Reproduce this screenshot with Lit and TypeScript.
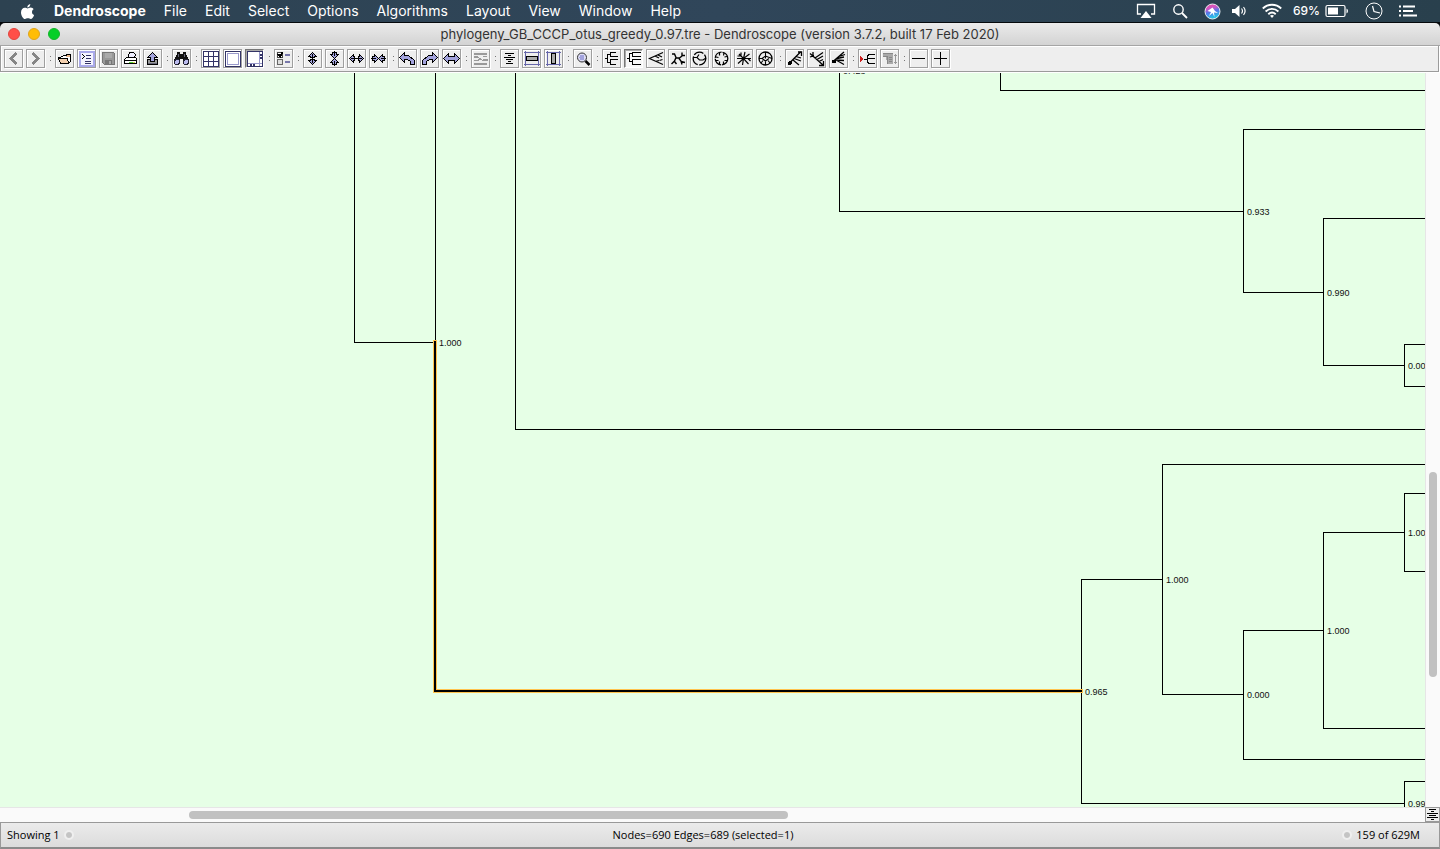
import { LitElement, html, svg, css, nothing, type SVGTemplateResult } from "lit";
import { customElement, property } from "lit/decorators.js";
import { classMap } from "lit/directives/class-map.js";
import { styleMap } from "lit/directives/style-map.js";

const line = (d: string, stroke = "#000", width = 1) =>
  svg`<path d=${d} fill="none" stroke=${stroke} stroke-width=${width} />`;
const shape = (d: string, fill: string, stroke = "#000") =>
  svg`<path d=${d} fill=${fill} stroke=${stroke} />`;
const smooth = (d: string, stroke = "#000", width = 1.4) =>
  svg`<path d=${d} fill="none" stroke=${stroke} stroke-width=${width} shape-rendering="auto" />`;

const LILAC = "#a3a3dd";
const NAVY = "#333366";

const arrowV = (y: number, dir: number) =>
  shape(`M9.5 ${y}L${13.5} ${y + 4 * dir}H11.5V${y + 5 * dir}H7.5V${y + 4 * dir}H5.5Z`, LILAC);
const arrowH = (x: number, dir: number) =>
  shape(`M${x} 9.5L${x + 4 * dir} 5.5V7.5H${x + 5 * dir}V11.5H${x + 4 * dir}V13.5Z`, LILAC);

const ICONS: Record<string, SVGTemplateResult> = {
  back: svg`<path d="M12.5 4L7 9.5L12.5 15" fill="none" stroke="#858585" stroke-width="3" />`,
  forward: svg`<path d="M6.5 4L12 9.5L6.5 15" fill="none" stroke="#858585" stroke-width="3" />`,
  open: svg`${shape("M3.5 8.5H5.5L8.5 6.5H10.5L12.5 5.5H15.5V12.5L13.5 14.5H5.5Z", "#fff")}
    ${shape("M3.5 9.5H12.5L13.5 14.5H5.5Z", "#f2cfae")}${line("M11 7.5H15M12 6.5H15", "#eab98f")}`,
  commands: svg`<rect x="3" y="3" width="14" height="14" fill="#f4f4ff" stroke="#a9a9ea" stroke-width="2" />
    ${line("M5 5.5H6M6 6.5H7M7 7.5H8M6 8.5H7M5 9.5H6")}${line("M9 6.5H14M9 9.5H14M8 12.5H14M8 14.5H14", NAVY)}`,
  save: svg`${shape("M3.5 3.5H14.5L15.5 4.5V15.5H5.5L3.5 13.5Z", "#999", "#777")}
    <rect x="6" y="4" width="7" height="5" fill="#aaa" /><rect x="6" y="11" width="7" height="5" fill="#777" /><rect x="10" y="12" width="2" height="3" fill="#aaa" />`,
  print: svg`${shape("M6.5 9.5L8.5 3.5H12.5L14.5 5.5L13.5 9.5Z", "#eef")}
    ${shape("M3.5 10.5L5.5 8.5H14.5L15.5 9.5V14.5H3.5Z", "#fff")}${line("M4 11.5H15")}${line("M8 13.5H12", "#5c3", 1)}${line("M12 13.5H14", "#dd4", 1)}`,
  export: svg`${shape("M4.5 10.5H14.5V15.5H4.5Z", "#999")}${line("M5 14.5H14", "#667")}
    ${shape("M9.5 3.5L14.5 8.5H11.5V12.5H7.5V8.5H4.5Z", LILAC)}`,
  find: svg`<path d="M5 3H8V5H11V3H14V5L17 11V14H11V10H8V14H2V11L5 5Z" fill="#111" />
    <circle cx="5" cy="13" r="2.5" fill="#bbe" stroke="#223" /><circle cx="14" cy="13" r="2.5" fill="#bbe" stroke="#223" />
    ${line("M6.5 5V8M12.5 5V8", "#667")}`,
  grid: svg`<rect x="1" y="1" width="17" height="17" fill="#fff" />${line("M2.5 2V18M7.5 2V18M12.5 2V18M17.5 2V18M2 2.5H18M2 7.5H18M2 12.5H18M2 17.5H18", NAVY)}`,
  frame: svg`<rect x="2.5" y="2.5" width="15" height="15" fill="#fff" stroke=${NAVY} /><rect x="4.5" y="4.5" width="11" height="11" fill="#fff" stroke="#9999cc" />`,
  scrollbars: svg`<rect x="2.5" y="2.5" width="15" height="15" fill="#fff" stroke=${NAVY} />${line("M14.5 3V17M3 14.5H17", "#9999cc")}
    <rect x="15" y="5" width="3" height="2" fill=${NAVY} /><rect x="15" y="8" width="3" height="2" fill=${NAVY} /><rect x="5" y="15" width="2" height="3" fill=${NAVY} /><rect x="8" y="15" width="2" height="3" fill=${NAVY} />`,
  checklist: svg`<rect x="3.5" y="3.5" width="5" height="5" fill="#fff" stroke="#444" /><rect x="3.5" y="10.5" width="5" height="5" fill="#ddd" stroke="#666" />
    ${line("M4 5L6 7.5L8.5 3", "#000", 2)}${line("M11 6H16M11 13H16", "#7777aa", 2)}`,
  expandV: svg`${arrowV(3.5, 1)}${arrowV(15.5, -1)}${line("M9.5 5V14")}`,
  contractV: svg`${shape("M7.5 3.5H11.5V5.5H13.5L9.5 9.5L5.5 5.5H7.5Z", LILAC)}${shape("M7.5 15.5H11.5V13.5H13.5L9.5 9.5L5.5 13.5H7.5Z", LILAC)}${line("M9.5 2V7M9.5 12V17")}`,
  expandH: svg`${arrowH(2.5, 1)}${arrowH(16.5, -1)}${line("M4 9.5H15")}`,
  contractH: svg`${shape("M3.5 7.5H5.5V5.5L9.5 9.5L5.5 13.5V11.5H3.5Z", LILAC)}${shape("M15.5 7.5H13.5V5.5L9.5 9.5L13.5 13.5V11.5H15.5Z", LILAC)}${line("M2 9.5H7M12 9.5H17")}`,
  undo: shape("M1.5 8.5L6.5 3.5V6.5H10.5L16.5 11.5V15.5H12.5V12.5L9.5 10.5H6.5V13.5Z", LILAC),
  redo: shape("M17.5 8.5L12.5 3.5V6.5H8.5L2.5 11.5V15.5H6.5V12.5L9.5 10.5H12.5V13.5Z", LILAC),
  swap: shape("M1.5 9.5L6.5 4.5V7.5H12.5V4.5L17.5 9.5L12.5 14.5V11.5H6.5V14.5Z", LILAC),
  tangle: svg`${line("M3 4.5H16M3 14.5H16", "#999", 2)}${line("M3 8H7M12 11H17", "#999", 2)}${line("M7 8.5L12 11.5M3 11.5H6L9 10.5M12 7.5H16", "#999")}`,
  center: line("M5 4.5H14M8 6.5H11M4 8.5H15M6 10.5H13M8 12.5H11M6 14.5H13"),
  fitH: svg`${line("M3.5 2V17M16.5 2V17M2 3.5H18M2 15.5H18", "#6666aa")}<rect x="4.5" y="7.5" width="11" height="4" fill="#aaa" stroke="#000" />`,
  fitV: svg`${line("M2 3.5H17M2 15.5H17M3.5 2V17M15.5 2V17", "#6666aa")}<rect x="7.5" y="4.5" width="4" height="10" fill="#aaa" stroke="#000" />`,
  zoom: svg`<circle cx="9" cy="8.5" r="4.5" fill="#ddddf5" stroke="#333" shape-rendering="auto" /><circle cx="9" cy="8.5" r="2.5" fill="#a3a3dd" />${smooth("M12.5 12L16.5 16", "#000", 2.5)}`,
  phylogram: line("M3 9.5H5.5M8 5.5H5.5V13.5H8M8.5 3.5V7.5M8 3.5H14M8 7.5H16M8.5 10.5V15.5M8 10.5H16M8 15.5H14"),
  cladogram: line("M3 9.5H5.5M5.5 4V13M5 4.5H9M8.5 3V7.5M8 3.5H17M8 7.5H17M5 12.5H9M8.5 10V15.5M8 10.5H17M8 15.5H17"),
  slanted: smooth("M17 3.5L3.5 9.5L17 15.5M12 6L16 8M13.5 11.5L16.5 10.5M10 12.3L13 11.5M9 7L13 9", "#000", 1.2),
  radial: smooth("M4 5H6.5L8 8.5L6.5 12L3.5 15M6.5 12.5L8.5 15M8 9H11.5L14 7V3.5M14 6.5H17M11 9.5L13 12L14 15.5M13 12.5L17 13.5"),
  circular: svg`<circle cx="9.5" cy="9.5" r="6.3" fill="none" stroke="#000" stroke-width="1.3" stroke-dasharray="10 1.5" shape-rendering="auto" />${smooth("M3 8.5H7L9.5 11H13L16 9M7 8.5L9 5.5", "#000", 1.2)}`,
  circularCladogram: svg`<circle cx="9.5" cy="9.5" r="6.3" fill="none" stroke="#000" stroke-width="1.3" stroke-dasharray="9 1" shape-rendering="auto" />${smooth("M7.5 4V6.500M12 4L11.500 6.500M15 7.500L12.500 8M15 11.500H12.500M11.500 15V12.500M7.500 15V12.500M4 11.500H6.500M4 8L6.500 8.500", "#000", 1.2)}`,
  innerCircular: smooth("M3 9.5H17M9.5 9.5L11 3M9.5 9.5L8.5 16M5 5L9.5 9.5L15.5 5M4 14.5L9.5 9.5L14.5 15M7 3.5V7M3.5 7H7M14 9.5L16.5 12", "#000", 1.2),
  wheel: svg`<circle cx="9.5" cy="9.5" r="6.5" fill="none" stroke="#000" stroke-width="1.3" shape-rendering="auto" />${smooth("M9.5 3V9.5M3 9.5H6L9.5 7L16 9.5M6 9.5L9.5 12L13 9.5M9.5 12V16M5 14L7 11.5M14 14L12 11.5", "#000", 1.1)}`,
  labelsUp: svg`${smooth("M4 14.5L16 2.5M9 9.5L16 12M11 7.5L16 9M8 11L14 16M13 3H16.5V7", "#000", 1.3)}<circle cx="5" cy="14" r="2" fill="#000" />`,
  labelsDown: svg`${smooth("M3 4.5L16 16M8 9L16 3.5M10 10.5L16 7M12 12.5L16 10.5M16.5 12V16.5H12M3 8L6 7V3", "#000", 1.3)}<circle cx="6" cy="7" r="1.5" fill="#000" />`,
  labels: svg`${smooth("M4 12.5L15 3M8 9.5L15 8M6 11L15 11.5M7 11L15 15.5M10 7.5L16 5.5", "#000", 1.3)}<circle cx="5" cy="12.5" r="2" fill="#000" />`,
  reroot: svg`<path d="M2 7L5 10L2 13Z" fill="#c22" />${line("M6 10.5H9.5M17 5.5H11L9.5 7V13L11 14.5H17M10 9.500H17")}`,
  subtree: svg`<path d="M3 4H13V15H8V11H6V8H3Z" fill="#aaa" />${line("M3 4.5H13M3 7.5H8M7.5 8V14.5M9 8.5H12M9 10.5H12M9 12.5H12", "#888")}${line("M15.5 5V15M14 6.5H17M14 13.5H17", "#999")}`,
  minus: line("M3 9.5H16"),
  plus: line("M3 9.5H16M9.5 3V16"),
};

const TOOLS: [string, string][][] = [
  [["back", "Previous"], ["forward", "Next"]],
  [["open", "Open"], ["commands", "Enter command"], ["save", "Save"], ["print", "Print"], ["export", "Export image"]],
  [["find", "Find"]],
  [["grid", "Set grid"], ["frame", "Less panels"], ["scrollbars", "Show scrollbars"]],
  [["checklist", "Format"]],
  [["expandV", "Expand vertical"], ["contractV", "Contract vertical"], ["expandH", "Expand horizontal"], ["contractH", "Contract horizontal"]],
  [["undo", "Rotate left"], ["redo", "Rotate right"], ["swap", "Flip"]],
  [["tangle", "Tanglegram"]],
  [["center", "Zoom to fit"], ["fitH", "Fit width"], ["fitV", "Fit height"]],
  [["zoom", "Magnifier"]],
  [["phylogram", "Phylogram"], ["cladogram", "Cladogram"], ["slanted", "Slanted cladogram"], ["radial", "Radial"], ["circular", "Circular phylogram"], ["circularCladogram", "Circular cladogram"], ["innerCircular", "Inner circular"], ["wheel", "Wheel"]],
  [["labelsUp", "Rotate subtrees"], ["labelsDown", "Ladderize right"], ["labels", "Ladderize left"]],
  [["reroot", "Reroot"], ["subtree", "Reorder subtree"]],
  [["minus", "Collapse"], ["plus", "Uncollapse"]],
];
const PRESSED = new Set(["scrollbars", "cladogram"]);
const DISABLED = new Set(["back", "forward", "save", "tangle", "subtree"]);

const MENUS = ["File", "Edit", "Select", "Options", "Algorithms", "Layout", "View", "Window", "Help"];

@customElement("mac-menu-bar")
class MacMenuBar extends LitElement {
  static styles = css`
    :host { display: flex; align-items: center; justify-content: space-between; height: 22px;
      padding: 0 23px 0 20px; border-bottom: 1px solid #05090c; color: #fff;
      background: linear-gradient(90deg, #2d4251, #30465a 50%, #29404d);
      font: 400 14px/22px Inter, "Liberation Sans", sans-serif; }
    nav, .tray { display: flex; align-items: center; }
    nav { gap: 18px; }
    button { font: inherit; color: inherit; background: none; border: 0; padding: 0; display: block; }
    .app { font-weight: 700; }
    .tray { gap: 16px; }
    .pair { display: flex; align-items: center; gap: 11px; }
    .battery { display: flex; align-items: center; gap: 5px; font-size: 12px; font-weight: 500; }
    svg { display: block; }
  `;
  render() {
    return html`
      <nav>
        <button aria-label="Apple">
          <svg width="16" height="17" viewBox="0 0 16 17" fill="#fff"><path d="M10.300 1C10.400 2.800 8.900 4.500 7.300 4.500C7.100 2.900 8.600 1.200 10.300 1ZM7.600 5.400C8.200 5.400 9.200 4.600 10.600 4.600C12 4.600 13.100 5.400 13.600 6.200C11.300 7.600 11.600 11 14.100 12C13.500 13.800 12.100 16 10.800 16C9.700 16 9.300 15.300 7.900 15.300C6.500 15.300 6 16 5 16C3.300 16 1 12.500 1 9.400C1 6.300 2.900 4.700 4.800 4.700C6 4.700 7 5.400 7.600 5.400Z" /></svg>
        </button>
        <button class="app">Dendroscope</button>
        ${MENUS.map((m) => html`<button>${m}</button>`)}
      </nav>
      <div class="tray">
        <svg width="20" height="16" viewBox="0 0 20 16"><path d="M5 11H1.500V1.500H18.500V11H15" fill="none" stroke="#fff" stroke-width="1.300" /><path d="M10 8L15.500 15H4.500Z" fill="#fff" /></svg>
        <svg width="16" height="16" viewBox="0 0 16 16" fill="none" stroke="#fff"><circle cx="6.500" cy="6.500" r="4.700" stroke-width="1.400" /><path d="M10 10L15 15" stroke-width="1.800" /></svg>
        <div class="pair">
          <svg width="17" height="17" viewBox="0 0 17 17">
            <defs><linearGradient id="s" x1="0" y1="0" x2="0.300" y2="1"><stop offset="0" stop-color="#f2509a" /><stop offset=".35" stop-color="#d055c5" /><stop offset=".6" stop-color="#5577e8" /><stop offset="1" stop-color="#27c7e8" /></linearGradient></defs>
            <circle cx="8.500" cy="8.500" r="7.500" fill="url(#s)" stroke="#e8eef5" /><path d="M8.500 4.500L11 8L14 10L10 9.500L10.500 14L8.500 10L5 13L7 9L3.500 8Z" fill="#fff" />
          </svg>
          <svg width="14" height="14" viewBox="0 0 14 14"><path d="M0 5H3L7.500 1V13L3 9H0Z" fill="#fff" /><path d="M9.500 4.500C10.700 6 10.700 8 9.500 9.500M11.500 3C13.500 5.500 13.500 8.500 11.500 11" fill="none" stroke="#fff" stroke-width="1.200" /></svg>
        </div>
        <div class="pair">
          <svg width="20" height="16" viewBox="0 0 20 16" fill="none" stroke="#fff" stroke-width="1.900"><path d="M.8 5.500C6 .5 14 .5 19.200 5.500M3.600 8.500C7.400 5 12.600 5 16.400 8.500M6.300 11.300C8.500 9.300 11.500 9.300 13.700 11.300" /><path d="M10 15L8 12.800C9.200 11.800 10.800 11.800 12 12.800Z" fill="#fff" stroke="none" /></svg>
          <span class="battery">69%
            <svg width="24" height="14" viewBox="0 0 24 14"><rect x="1" y="1.500" width="19" height="11" rx="1.500" fill="none" stroke="#fff" stroke-width="1.200" /><rect x="3" y="3.500" width="10" height="7" fill="#fff" /><path d="M21.500 4.500C23.500 5.500 23.500 8.500 21.500 9.500Z" fill="#fff" /></svg>
          </span>
        </div>
        <svg width="18" height="18" viewBox="0 0 18 18" fill="none" stroke="#fff"><circle cx="9" cy="9" r="8" /><path d="M7.500 4L9 9.500L15 11" stroke-width="1.200" /></svg>
        <svg width="18" height="12" viewBox="0 0 18 12" fill="none" stroke="#fff" stroke-width="2"><path d="M0 1.500H2M4 1.500H16M0 6H2M4 6H14M0 10.500H2M4 10.500H18" /></svg>
      </div>
    `;
  }
}

@customElement("tool-bar")
class ToolBar extends LitElement {
  static styles = css`
    :host { display: flex; align-items: center; gap: 3px; height: 25px; padding: 0 3px;
      margin-right: 1px; background: #eee; border: 1px solid #9b9b9b; border-top: 0;
      box-shadow: inset 1px 1px #fff; }
    .group { display: flex; gap: 3px; }
    .sep { width: 4px; height: 5px; display: flex; flex-direction: column; align-items: center; justify-content: space-between; }
    .sep::before, .sep::after { content: ""; width: 1px; height: 1px; background: #777; }
    button { width: 19px; height: 19px; padding: 0; border: 1px solid #9f9f9f; background: #eee;
      box-shadow: inset 1px 1px #fff, 1px 1px #fff; }
    .pressed { background: #f7f7f7; border-color: #777 #fff #fff #777; box-shadow: inset 1px 1px #aaa; }
    svg { width: 19px; height: 19px; margin: -1px; display: block; }
  `;
  render() {
    return html`${TOOLS.map((group, i) => html`
      ${i ? html`<span class="sep"></span>` : nothing}
      <div class="group" role="group">
        ${group.map(([id, label]) => html`
          <button aria-label=${label} ?disabled=${DISABLED.has(id)} class=${classMap({ pressed: PRESSED.has(id) })}>
            <svg viewBox="0 0 19 19" shape-rendering="crispEdges">${ICONS[id]}</svg>
          </button>`)}
      </div>`)}`;
  }
}

const BRANCHES = [
  "M354.5 60V342.5H435.5V60", "M515.5 60V429.5H2400", "M839.5 60V211.5H1243.5", "M1000.5 60V90.5H2400",
  "M2400 129.5H1243.5V292.5H1323.5", "M2400 218.5H1323.5V365.5H1404.5", "M2400 344.5H1404.5V386.5H2400",
  "M2400 464.5H1162.5V694.5H1243.5", "M2400 493.5H1404.5V571.5H2400", "M1404.5 532.5H1323.5V728.5H2400",
  "M1323.5 630.5H1243.5V759.5H2400", "M1162.5 579.5H1081.5V803.5H1404.5", "M2400 781.5H1404.5V840",
];
const SUPPORT: [number, number, string][] = [
  [843, 74, "0.428"], [1247, 215, "0.933"], [1327, 296, "0.990"], [1408, 369, "0.000"], [439, 346, "1.000"],
  [1408, 536, "1.000"], [1166, 583, "1.000"], [1327, 634, "1.000"], [1247, 698, "0.000"], [1085, 695, "0.965"], [1408, 807, "0.990"],
];

@customElement("tree-view")
class TreeView extends LitElement {
  static styles = css`
    :host { display: block; overflow: hidden; background: #e6ffe6; min-width: 0; min-height: 0; contain: size; }
    svg { display: block; width: 100%; height: 100%; }
    .branch { fill: none; stroke: #000; shape-rendering: crispEdges; }
    .halo { fill: none; stroke: #ffc34d; stroke-width: 4px; }
    .selected { fill: none; stroke: #000; stroke-width: 2px; }
    text { font: 9px "Liberation Sans", Arial, sans-serif; fill: #111; }
  `;
  render() {
    return html`<svg role="img" aria-label="Phylogenetic tree"><g transform="translate(0 -73)">
      ${BRANCHES.map((d) => svg`<path class="branch" d=${d} />`)}
      <path class="halo" d="M435 340V691H1083" /><path class="selected" d="M435 341V691H1082" />
      ${SUPPORT.map(([x, y, t]) => svg`<text x=${x} y=${y}>${t}</text>`)}
    </g></svg>`;
  }
}

@customElement("scroll-track")
class ScrollTrack extends LitElement {
  @property({ type: Boolean, reflect: true }) vertical = false;
  @property({ type: Number }) start = 0;
  @property({ type: Number }) extent = 50;
  static styles = css`
    :host { display: flex; background: #fafafa; border-top: 1px solid #e6e6e6; padding: 3px 0; box-sizing: border-box; }
    :host([vertical]) { flex-direction: column; border-top: 0; border-left: 1px solid #e6e6e6; padding: 0 3px; }
    .thumb { background: #c1c1c1; border-radius: 4px; }
  `;
  render() {
    return html`<div style=${styleMap({ flex: `0 0 ${this.start}%` })}></div>
      <div class="thumb" style=${styleMap({ flex: `0 0 ${this.extent}%` })}></div>`;
  }
}

@customElement("app-root")
class AppRoot extends LitElement {
  static styles = css`
    :host { display: flex; flex-direction: column; height: 100vh; overflow: hidden; background: #fff; color: #111; }
    .frame { background: #05090c; flex: none; }
    .title { display: grid; grid-template-columns: 1fr auto 1fr; align-items: center; height: 22px;
      padding: 0 8px; background: linear-gradient(#ebebeb, #d3d3d3); border-bottom: 1px solid #a5a5a5;
      border-radius: 5px 5px 0 0; }
    .lights { display: flex; gap: 8px; }
    .light { width: 12px; height: 12px; padding: 0; border-radius: 50%; border: 1px solid #e2453f; background: #ff4f48; }
    .minimize { background: #ffbd05; border-color: #e0a41c; }
    .maximize { background: #05cf28; border-color: #15b52b; }
    h1 { margin: 0; font: 400 13px/22px Inter, "Liberation Sans", sans-serif; color: #333; white-space: nowrap; }
    mac-menu-bar, tool-bar { flex: none; }
    .work { flex: 1; min-height: 0; margin-top: 1px; display: grid; grid-template: minmax(0, 1fr) 15px / minmax(0, 1fr) 15px; }
    .corner { padding: 0; border: 1px solid #999; background: #eee; display: grid; place-items: center; }
    .corner svg { display: block; }
    footer { flex: none; display: grid; grid-template-columns: 1fr auto 1fr; align-items: center; height: 24px;
      padding: 0 19px 0 6px; border: 1px solid #999; border-bottom: 2px solid #8b8b8b;
      background: linear-gradient(#ebebeb, #dcdcdc); font: 11px/24px "Open Sans", "Noto Sans", sans-serif; color: #000; }
    .cell { display: flex; align-items: center; gap: 6px; }
    .summary { padding-right: 21px; }
    .end { justify-content: flex-end; }
    .dot { width: 6px; height: 6px; border-radius: 50%; background: #c4c4c4; box-shadow: 0 0 0 1px #d8d8d8; outline: 2px solid #efefef; }
  `;
  render() {
    return html`
      <mac-menu-bar></mac-menu-bar>
      <div class="frame"><header class="title">
        <div class="lights">
          <button class="light" aria-label="Close"></button>
          <button class="light minimize" aria-label="Minimize"></button>
          <button class="light maximize" aria-label="Zoom"></button>
        </div>
        <h1>phylogeny_GB_CCCP_otus_greedy_0.97.tre - Dendroscope (version 3.7.2, built 17 Feb 2020)</h1>
      </header></div>
      <tool-bar></tool-bar>
      <main class="work">
        <tree-view></tree-view>
        <scroll-track vertical .start=${54.4} .extent=${27.9}></scroll-track>
        <scroll-track .start=${13.26} .extent=${42.04}></scroll-track>
        <button class="corner" aria-label="Center view">
          <svg width="13" height="13" viewBox="0 0 13 13" shape-rendering="crispEdges"><path d="M3 1.500H10M5 3.500H8M1 5.500H12M3 7.500H10M1 9.500H12M5 11.500H8" stroke="#000" /></svg>
        </button>
      </main>
      <footer>
        <div class="cell"><span>Showing 1</span><span class="dot"></span></div>
        <div class="summary">Nodes=690 Edges=689 (selected=1)</div>
        <div class="cell end"><span class="dot"></span><span>159 of 629M</span></div>
      </footer>
    `;
  }
}
